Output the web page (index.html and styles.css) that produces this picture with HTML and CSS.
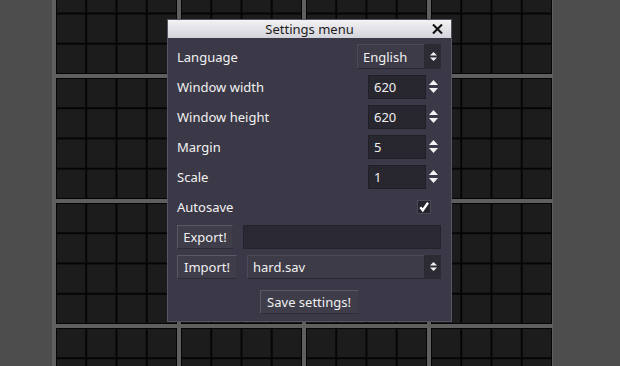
FILE: index.html
```html
<!DOCTYPE html>
<html>
<head>
<meta charset="utf-8">
<link rel="stylesheet" href="styles.css">
</head>
<body>
<div class="viewport">
<div class="board">
  <div class="block"></div><div class="block"></div><div class="block"></div><div class="block"></div>
  <div class="block"></div><div class="block"></div><div class="block"></div><div class="block"></div>
  <div class="block"></div><div class="block"></div><div class="block"></div><div class="block"></div>
  <div class="block"></div><div class="block"></div><div class="block"></div><div class="block"></div>
</div>

<div class="dialog">
  <div class="titlebar">
    <span class="title">Settings menu</span>
    <span class="close"><svg width="11" height="10" viewBox="0 0 11 10"><path d="M1 0.5 L10 9.5 M10 0.5 L1 9.5" stroke="#111" stroke-width="2.1" fill="none"/></svg></span>
  </div>
  <div class="content">
    <div class="row">
      <span class="label">Language</span>
      <div class="select lang">
        <span class="sel-box">English</span>
        <span class="sel-arrow"><svg width="7" height="9" viewBox="0 0 7 9"><polygon points="0,3.5 3.5,0 7,3.5" fill="#f2f2f2"/><polygon points="0,5.5 7,5.5 3.5,9" fill="#f2f2f2"/></svg></span>
      </div>
    </div>
    <div class="row">
      <span class="label">Window width</span>
      <div class="spin">
        <span class="spin-input">620</span>
        <svg class="spin-arrows" width="9" height="13" viewBox="0 0 9 13"><polygon points="0,5 4.5,0 9,5" fill="#f2f2f2"/><polygon points="0,8 9,8 4.5,13" fill="#f2f2f2"/></svg>
      </div>
    </div>
    <div class="row">
      <span class="label">Window height</span>
      <div class="spin">
        <span class="spin-input">620</span>
        <svg class="spin-arrows" width="9" height="13" viewBox="0 0 9 13"><polygon points="0,5 4.5,0 9,5" fill="#f2f2f2"/><polygon points="0,8 9,8 4.5,13" fill="#f2f2f2"/></svg>
      </div>
    </div>
    <div class="row">
      <span class="label">Margin</span>
      <div class="spin">
        <span class="spin-input">5</span>
        <svg class="spin-arrows" width="9" height="13" viewBox="0 0 9 13"><polygon points="0,5 4.5,0 9,5" fill="#f2f2f2"/><polygon points="0,8 9,8 4.5,13" fill="#f2f2f2"/></svg>
      </div>
    </div>
    <div class="row">
      <span class="label">Scale</span>
      <div class="spin">
        <span class="spin-input">1</span>
        <svg class="spin-arrows" width="9" height="13" viewBox="0 0 9 13"><polygon points="0,5 4.5,0 9,5" fill="#f2f2f2"/><polygon points="0,8 9,8 4.5,13" fill="#f2f2f2"/></svg>
      </div>
    </div>
    <div class="row">
      <span class="label">Autosave</span>
      <span class="checkbox"><svg width="12" height="12" viewBox="0 0 12 12"><path d="M2.3 6.2 L4.8 9.2 L10 1.8" stroke="#fff" stroke-width="2.4" fill="none" stroke-linejoin="miter"/></svg></span>
    </div>
    <div class="row left">
      <span class="button export">Export!</span>
      <span class="field"></span>
    </div>
    <div class="row left">
      <span class="button import">Import!</span>
      <div class="select file">
        <span class="sel-box">hard.sav</span>
        <span class="sel-arrow"><svg width="7" height="9" viewBox="0 0 7 9"><polygon points="0,3.5 3.5,0 7,3.5" fill="#f2f2f2"/><polygon points="0,5.5 7,5.5 3.5,9" fill="#f2f2f2"/></svg></span>
      </div>
    </div>
    <div class="save-row">
      <span class="button save">Save settings!</span>
    </div>
  </div>
</div>
</div>
</body>
</html>
```

FILE: styles.css
```css
html, body {
  margin: 0;
  padding: 0;
  overflow: hidden;
}

body {
  background: #4d4d4d;
  font-family: "Noto Sans", "Open Sans", "DejaVu Sans", sans-serif;
  font-size: 13px;
}

.viewport {
  position: relative;
  width: 620px;
  height: 366px;
  overflow: hidden;
}

.board {
  display: grid;
  grid-template-columns: repeat(4, 121px);
  grid-auto-rows: 121px;
  gap: 4px;
  padding: 4px 1px 4px 4px;
  width: max-content;
  margin: -51px 0 0 52px;
  background: #5f5f5f;
}

.block {
  background-color: #1c1c1c;
  background-image:
    linear-gradient(to right, #050505 2px, transparent 2px),
    linear-gradient(to bottom, #050505 2px, transparent 2px);
  background-size: 30.25px 100%, 100% 30.25px;
  background-position: -1px 0, 0 -1px;
  box-shadow: inset 0 0 0 1px #050505;
}

.dialog {
  position: absolute;
  left: 167px;
  top: 19px;
  width: 285px;
  height: 303px;
  box-sizing: border-box;
  background: #3b3947;
  border: 1px solid #57555f;
  color: #f0f0f0;
}

.titlebar {
  position: relative;
  height: 18px;
  background: linear-gradient(#f3f3f5, #d3d3da);
  display: flex;
  align-items: center;
  justify-content: center;
  color: #1c1c1c;
}

.title {
  line-height: 18px;
}

.close {
  position: absolute;
  right: 8px;
  top: 4px;
  display: flex;
}

.content {
  display: flex;
  flex-direction: column;
  gap: 5px;
  padding: 6px 10px 0 9px;
}

.row {
  height: 25px;
  display: flex;
  align-items: center;
  justify-content: space-between;
}

.row.left {
  justify-content: flex-start;
  gap: 10px;
}

.label {
  color: #f2f2f2;
}

.select {
  display: flex;
  height: 25px;
}

.select.lang {
  width: 84px;
}

.select.file {
  flex: 1;
  height: 24px;
}

.sel-box {
  flex: 1;
  box-sizing: border-box;
  display: flex;
  align-items: center;
  padding-left: 5px;
  background: #3d3b47;
  border: 1px solid #2a2831;
  border-top-color: #4c4a56;
  border-left-color: #4c4a56;
}

.sel-arrow {
  width: 16px;
  display: flex;
  align-items: center;
  justify-content: center;
  background: #2c2a33;
}

.spin {
  display: flex;
  align-items: center;
}

.spin-input {
  width: 58px;
  height: 24px;
  box-sizing: border-box;
  display: flex;
  align-items: center;
  padding-left: 5px;
  background: #28262f;
  border: 1px solid #211f27;
}

.spin-arrows {
  margin: 0 3px 0 3px;
}

.checkbox {
  width: 14px;
  height: 14px;
  box-sizing: border-box;
  margin-right: 10px;
  background: #25232b;
  border: 1px solid #4b4955;
  display: flex;
  align-items: center;
  justify-content: center;
}

.button {
  height: 24px;
  box-sizing: border-box;
  display: flex;
  align-items: center;
  justify-content: center;
  background: #3f3d49;
  border: 1px solid #5a5865;
  border-bottom-color: #2d2b34;
  border-right-color: #3a3842;
  color: #f0f0f0;
}

.button.export {
  width: 56px;
}

.button.import {
  width: 60px;
}

.field {
  flex: 1;
  height: 24px;
  box-sizing: border-box;
  background: #2a2832;
  border: 1px solid #24222b;
}

.save-row {
  display: flex;
  justify-content: center;
  margin-top: 6px;
}

.button.save {
  width: 99px;
}
```
